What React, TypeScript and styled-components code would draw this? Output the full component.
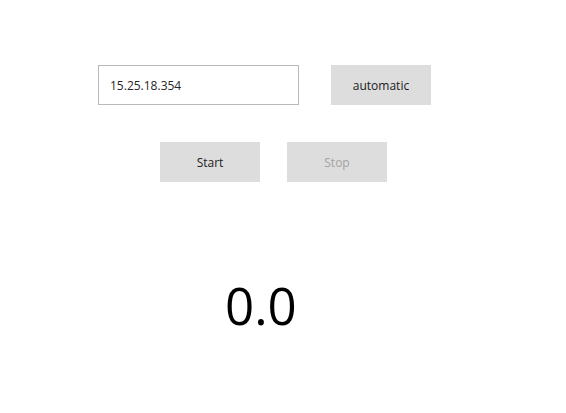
import React from "react";
import styled, { createGlobalStyle } from "styled-components";

const Global = createGlobalStyle`
  html, body { margin: 0; padding: 0; background: #ffffff; }
  body { font-family: "Open Sans", "Noto Sans", sans-serif; }
`;

const Page = styled.div`
  width: 566px;
  height: 413px;
  display: flex;
  flex-direction: column;
  box-sizing: border-box;
  padding-top: 65px;
`;

const Row = styled.div<{ $left: number; $gap: number; $top?: number }>`
  display: flex;
  gap: ${(p) => p.$gap}px;
  padding-left: ${(p) => p.$left}px;
  margin-top: ${(p) => p.$top ?? 0}px;
`;

const Field = styled.input`
  width: 201px;
  height: 40px;
  box-sizing: border-box;
  border: 1px solid #b9b9b9;
  padding: 0 0 0 11px;
  font-family: "Open Sans", "Noto Sans", sans-serif;
  font-size: 12px;
  color: #262626;
  outline: none;
  background: #fff;
`;

const Button = styled.button<{ $disabled?: boolean }>`
  width: 100px;
  height: 40px;
  border: none;
  background: #dddddd;
  font-family: "Open Sans", "Noto Sans", sans-serif;
  font-size: 12px;
  color: ${(p) => (p.$disabled ? "#a3a3a3" : "#1b1b1b")};
  padding: 0;
  cursor: default;
`;

const Value = styled.div`
  margin-top: 98px;
  padding-left: 225px;
  font-family: "Open Sans", "Noto Sans", sans-serif;
  font-size: 51px;
  line-height: 51px;
  color: #000;
`;

export default function App() {
  return (
    <>
      <Global />
      <Page>
        <Row $left={98} $gap={32}>
          <Field defaultValue="15.25.18.354" />
          <Button>automatic</Button>
        </Row>
        <Row $left={160} $gap={27} $top={37}>
          <Button>Start</Button>
          <Button $disabled>Stop</Button>
        </Row>
        <Value>0.0</Value>
      </Page>
    </>
  );
}
